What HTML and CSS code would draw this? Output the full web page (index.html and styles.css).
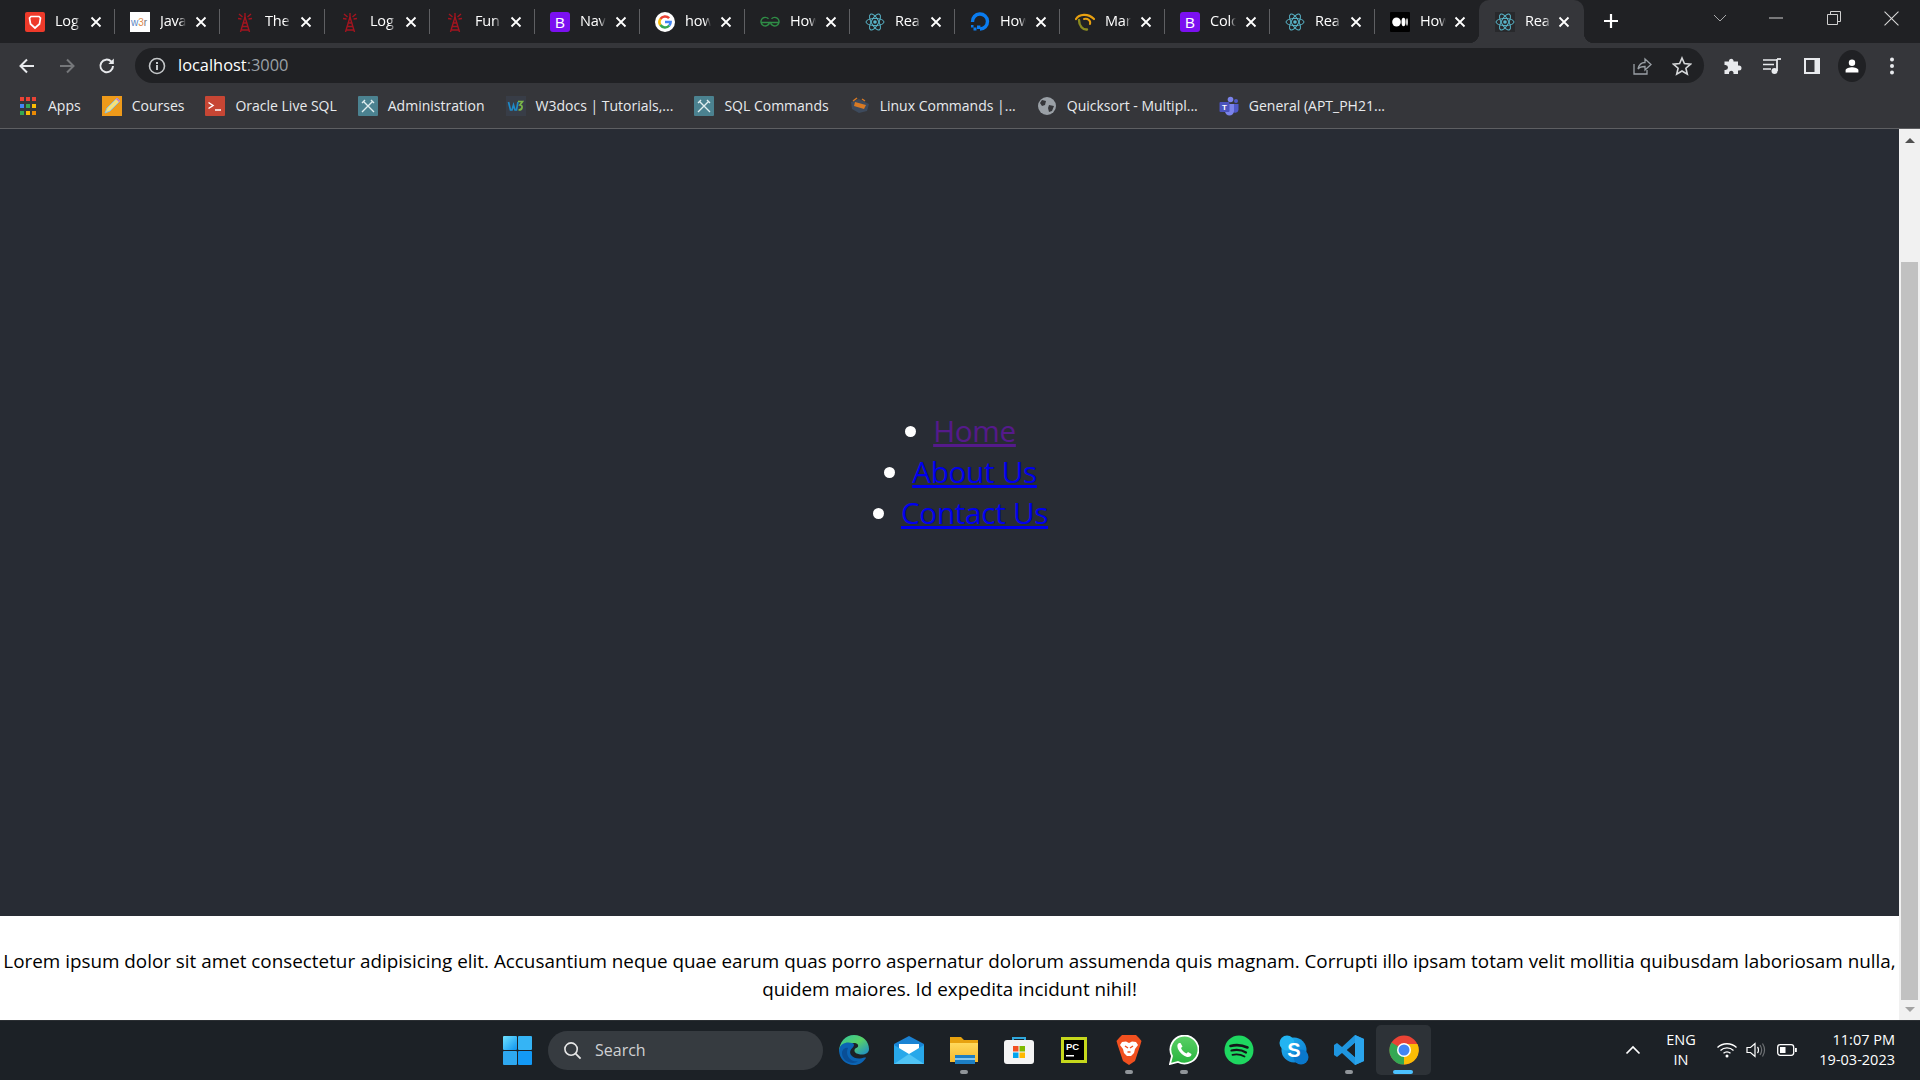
FILE: index.html
```html
<!DOCTYPE html>
<html lang="en">
<head>
<meta charset="utf-8">
<title>React App</title>
<link rel="stylesheet" href="styles.css">
</head>
<body>
<svg class="defs" aria-hidden="true">
  <defs>
    <symbol id="i-brave" viewBox="0 0 20 20"><rect width="20" height="20" rx="2" fill="#ee3a2a"/><path d="M4.5 6 L6 4.5 H14 L15.5 6 L14.5 12 L10 16 L5.500 12Z" fill="none" stroke="#fff" stroke-width="1.700"/></symbol>
    <symbol id="i-w3" viewBox="0 0 20 20"><rect width="20" height="20" fill="#fff"/><text x="1" y="14" font-size="10" font-family="Liberation Sans, sans-serif" fill="#5a86c5">w<tspan fill="#e08a4a">3</tspan><tspan fill="#777">r</tspan></text></symbol>
    <symbol id="i-tower" viewBox="0 0 20 20"><g fill="none" stroke="#a3141f" stroke-width="1.400"><path d="M10 5 L5.500 20 M10 5 L14.500 20 M7.500 11 H12.500 M7 14.500 H13 M6 18 H14"/><path d="M10 1 V5 M4 2 L7.500 5 M16 2 L12.500 5 M3 6.500 L6.500 7 M17 6.500 L13.500 7"/></g></symbol>
    <symbol id="i-boot" viewBox="0 0 20 20"><rect width="20" height="20" rx="3" fill="#7b10f0"/><text x="10" y="15.500" text-anchor="middle" font-size="15" font-family="Liberation Sans, sans-serif" fill="#fff">B</text></symbol>
    <symbol id="i-google" viewBox="0 0 20 20"><circle cx="10" cy="10" r="10" fill="#fff"/><g fill="none" stroke-width="2.600"><path d="M14.100 6.200A5.600 5.600 0 0 0 5.400 6.900" stroke="#ea4335"/><path d="M5.400 6.900A5.600 5.600 0 0 0 5.400 13.100" stroke="#fbbc05"/><path d="M5.400 13.100A5.600 5.600 0 0 0 14.300 13.500" stroke="#34a853"/><path d="M14.300 13.500A5.600 5.600 0 0 0 15.600 10H10" stroke="#4285f4"/></g></symbol>
    <symbol id="i-gfg" viewBox="0 0 20 20"><g fill="none" stroke="#2f8d46" stroke-width="1.400"><path d="M8.500 6.800A4.300 4.300 0 1 0 9.500 10.500H1"/><path d="M11.500 6.800A4.300 4.300 0 1 1 10.500 10.500H19"/></g></symbol>
    <symbol id="i-react" viewBox="0 0 20 20"><g fill="none" stroke="#58b4c8" stroke-width="1"><ellipse cx="10" cy="10" rx="9" ry="3.600"/><ellipse cx="10" cy="10" rx="9" ry="3.600" transform="rotate(60 10 10)"/><ellipse cx="10" cy="10" rx="9" ry="3.600" transform="rotate(120 10 10)"/></g><circle cx="10" cy="10" r="1.800" fill="#58b4c8"/></symbol>
    <symbol id="i-do" viewBox="0 0 20 20"><path d="M10 17A7.500 7.500 0 1 0 2.500 10" fill="none" stroke="#0a7cf0" stroke-width="3.400"/><path d="M7 13.500h3.400v3.400H7zM3.500 15.500h3v3h-3zM1 13h2.500v2.500H1z" fill="#0a7cf0"/></symbol>
    <symbol id="i-mar" viewBox="0 0 20 20"><g fill="none" stroke-linecap="round"><path d="M1 7C4 2 13 1 19 7" stroke="#e8a010" stroke-width="2.200"/><path d="M4 8C4 14 8 18 12 17.500" stroke="#8a8a20" stroke-width="2.400"/><path d="M9 7C13 6 16 9 15 12" stroke="#e8a010" stroke-width="2"/></g></symbol>
    <symbol id="i-medium" viewBox="0 0 20 20"><rect width="20" height="20" rx="1" fill="#000"/><ellipse cx="6.500" cy="10" rx="4.300" ry="4.500" fill="#fff"/><ellipse cx="13.500" cy="10" rx="2" ry="4.200" fill="#fff"/><ellipse cx="17" cy="10" rx="0.800" ry="3.800" fill="#fff"/></symbol>
    <symbol id="i-x" viewBox="0 0 12 12"><path d="M1.500 1.500 L10.500 10.500 M10.500 1.500 L1.500 10.500" stroke="#fff" stroke-width="1.800" fill="none"/></symbol>
    <symbol id="i-xmark" viewBox="0 0 20 20"><rect width="20" height="20" rx="1" fill="#4b8290"/><path d="M4 16 L14 6 M16 16 L6 6 M13 4 L16 7 M4 7 L7 4" stroke="#dfeef0" stroke-width="1.400" fill="none"/></symbol>
    <linearGradient id="g-win" x1="0" y1="0" x2="1" y2="1"><stop offset="0" stop-color="#6fe2ff"/><stop offset="1" stop-color="#0f94f0"/></linearGradient>
    <linearGradient id="g-edge" x1="0" y1="0" x2="1" y2="1"><stop offset="0" stop-color="#2fc4a0"/><stop offset="0.500" stop-color="#58d068"/><stop offset="1" stop-color="#1a8ad0"/></linearGradient>
    <linearGradient id="g-mail" x1="0" y1="0" x2="0" y2="1"><stop offset="0" stop-color="#1b7fd0"/><stop offset="1" stop-color="#1490df"/></linearGradient>
    <linearGradient id="g-folder" x1="0" y1="0" x2="0" y2="1"><stop offset="0" stop-color="#ffd95c"/><stop offset="1" stop-color="#f5b92e"/></linearGradient>
    <linearGradient id="g-skype" x1="0" y1="0" x2="1" y2="1"><stop offset="0" stop-color="#22b4f2"/><stop offset="1" stop-color="#0a78cc"/></linearGradient>
    <linearGradient id="g-wa" x1="0" y1="0" x2="0" y2="1"><stop offset="0" stop-color="#5bd066"/><stop offset="1" stop-color="#27b43e"/></linearGradient>
  </defs>
</svg>

<header class="tabstrip">
  <div class="tab"><svg class="fav"><use href="#i-brave"/></svg><span class="tab-title">Log</span><svg class="tab-x"><use href="#i-x"/></svg></div>
  <div class="tab"><svg class="fav"><use href="#i-w3"/></svg><span class="tab-title">Java</span><svg class="tab-x"><use href="#i-x"/></svg></div>
  <div class="tab"><svg class="fav"><use href="#i-tower"/></svg><span class="tab-title">The</span><svg class="tab-x"><use href="#i-x"/></svg></div>
  <div class="tab"><svg class="fav"><use href="#i-tower"/></svg><span class="tab-title">Log</span><svg class="tab-x"><use href="#i-x"/></svg></div>
  <div class="tab"><svg class="fav"><use href="#i-tower"/></svg><span class="tab-title">Fun</span><svg class="tab-x"><use href="#i-x"/></svg></div>
  <div class="tab"><svg class="fav"><use href="#i-boot"/></svg><span class="tab-title">Nav</span><svg class="tab-x"><use href="#i-x"/></svg></div>
  <div class="tab"><svg class="fav"><use href="#i-google"/></svg><span class="tab-title">how</span><svg class="tab-x"><use href="#i-x"/></svg></div>
  <div class="tab"><svg class="fav"><use href="#i-gfg"/></svg><span class="tab-title">How</span><svg class="tab-x"><use href="#i-x"/></svg></div>
  <div class="tab"><svg class="fav"><use href="#i-react"/></svg><span class="tab-title">Rea</span><svg class="tab-x"><use href="#i-x"/></svg></div>
  <div class="tab"><svg class="fav"><use href="#i-do"/></svg><span class="tab-title">How</span><svg class="tab-x"><use href="#i-x"/></svg></div>
  <div class="tab"><svg class="fav"><use href="#i-mar"/></svg><span class="tab-title">Mar</span><svg class="tab-x"><use href="#i-x"/></svg></div>
  <div class="tab"><svg class="fav"><use href="#i-boot"/></svg><span class="tab-title">Colo</span><svg class="tab-x"><use href="#i-x"/></svg></div>
  <div class="tab"><svg class="fav"><use href="#i-react"/></svg><span class="tab-title">Rea</span><svg class="tab-x"><use href="#i-x"/></svg></div>
  <div class="tab tab-prev"><svg class="fav"><use href="#i-medium"/></svg><span class="tab-title">How</span><svg class="tab-x"><use href="#i-x"/></svg></div>
  <div class="tab tab-active"><span class="fav-wrap"><svg class="fav"><use href="#i-react"/></svg></span><span class="tab-title">Rea</span><svg class="tab-x"><use href="#i-x"/></svg></div>
  <svg class="newtab" viewBox="0 0 16 16"><path d="M8 1V15M1 8H15" stroke="#fff" stroke-width="2.200" fill="none"/></svg>
  <div class="winctl">
    <svg class="wc wc-chev" viewBox="0 0 14 14"><path d="M1 4L7 10L13 4" stroke="#a8a9ab" fill="none"/></svg>
    <svg class="wc wc-min" viewBox="0 0 14 14"><path d="M0 7H14" stroke="#d0d0d0" fill="none"/></svg>
    <svg class="wc wc-res" viewBox="0 0 14 14"><path d="M.5 3.500H10.500V13.500H.5ZM3.500 3.500V.5H13.500V10.500H10.500" stroke="#d0d0d0" fill="none"/></svg>
    <svg class="wc wc-cls" viewBox="0 0 14 14"><path d="M.5 .5L13.500 13.500M13.500 .5L.5 13.500" stroke="#d8d8d8" fill="none"/></svg>
  </div>
</header>

<section class="toolbar">
  <div class="nav-row">
    <span class="tbtn"><svg viewBox="0 0 20 20"><path d="M17 10H4M10 3.500L3.500 10L10 16.500" stroke="#e8eaed" stroke-width="2" fill="none"/></svg></span>
    <span class="tbtn"><svg viewBox="0 0 20 20"><path d="M3 10H16M10 3.500L16.500 10L10 16.500" stroke="#75777a" stroke-width="2" fill="none"/></svg></span>
    <span class="tbtn"><svg viewBox="0 0 20 20"><path d="M16 10A6.300 6.300 0 1 1 14.200 5.500" stroke="#e8eaed" stroke-width="2" fill="none"/><path d="M16.800 2.500V8H11.300Z" fill="#e8eaed"/></svg></span>
    <div class="omnibox">
      <svg class="omni-info" viewBox="0 0 20 20"><circle cx="10" cy="10" r="7.500" stroke="#c4c7c9" stroke-width="1.600" fill="none"/><path d="M9 9h2v5H9zM9 6h2v2H9z" fill="#c4c7c9"/></svg>
      <span class="url">localhost<span class="url-port">:3000</span></span>
      <span class="tbtn omni-end"><svg viewBox="0 0 20 20"><path d="M2 8V18H15V14M6 13C7 8.500 10 6.500 13 6.500V3L19 8.500L13 14V10.500C10 10.500 7.500 11 6 13Z" stroke="#9aa0a6" stroke-width="1.300" fill="none"/></svg></span>
      <span class="tbtn"><svg viewBox="0 0 20 20"><path d="M10 2L12.400 7.600L18.500 8.200L13.900 12.200L15.300 18.200L10 15L4.700 18.200L6.100 12.200L1.500 8.200L7.600 7.600Z" stroke="#d5d7d9" stroke-width="1.600" fill="none"/></svg></span>
    </div>
    <div class="tools">
      <span class="tbtn"><svg viewBox="0 0 20 20"><path d="M7 4.500A2.300 2.300 0 0 1 11.500 4.500V5.500H16V9.500H17A2.500 2.500 0 0 1 17 14.500H16V18H11.500V16.500A2.300 2.300 0 0 0 7 16.500V18H2.500V14H3.500A2.500 2.500 0 0 0 3.500 9H2.500V5.500H7Z" fill="#e8eaed"/></svg></span>
      <span class="tbtn"><svg viewBox="0 0 20 20"><path d="M1 4H15M1 8.500H12M1 13H9" stroke="#e8eaed" stroke-width="1.700" fill="none"/><path d="M15 3V15" stroke="#e8eaed" stroke-width="1.800"/><path d="M15 3H19" stroke="#e8eaed" stroke-width="1.800"/><circle cx="12.500" cy="15" r="3" fill="#e8eaed"/></svg></span>
      <span class="tbtn"><svg viewBox="0 0 20 20"><path d="M2 2H18V18H2Z" fill="#e8eaed"/><rect x="4" y="4" width="8.500" height="12" fill="#35363a"/></svg></span>
      <span class="tbtn"><span class="avatar"><svg viewBox="0 0 20 20"><circle cx="10" cy="6" r="4" fill="#fff"/><path d="M2 18V15.500C2 12.500 7 11.500 10 11.500C13 11.500 18 12.500 18 15.500V18Z" fill="#fff"/></svg></span></span>
      <span class="tbtn"><svg viewBox="0 0 20 20"><circle cx="10" cy="3.500" r="2" fill="#e8eaed"/><circle cx="10" cy="10" r="2" fill="#e8eaed"/><circle cx="10" cy="16.500" r="2" fill="#e8eaed"/></svg></span>
    </div>
  </div>
  <nav class="bookmarks">
    <a class="bm"><svg class="bm-apps" viewBox="0 0 16 20"><g><rect y="1" width="4" height="4" fill="#ea4335"/><rect x="6" y="1" width="4" height="4" fill="#ea4335"/><rect x="12" y="1" width="4" height="4" fill="#ea4335"/><rect y="8" width="4" height="4" fill="#4285f4"/><rect x="6" y="8" width="4" height="4" fill="#34a853"/><rect x="12" y="8" width="4" height="4" fill="#fbbc05"/><rect y="15" width="4" height="4" fill="#34a853"/><rect x="6" y="15" width="4" height="4" fill="#fbbc05"/><rect x="12" y="15" width="4" height="4" fill="#ea8a05"/></g></svg>Apps</a>
    <a class="bm"><svg class="fav" viewBox="0 0 20 20"><rect width="20" height="20" fill="#ee9a1a"/><path d="M3 17L5 12L15 2L18 5L8 15Z" fill="#f5e07a" stroke="#8ac0e0" stroke-width="1"/><path d="M14 3L17 6L18 5L15 2Z" fill="#d070c0"/></svg>Courses</a>
    <a class="bm"><svg class="fav" viewBox="0 0 20 20"><rect width="20" height="20" rx="1" fill="#c74634"/><path d="M3.500 6.500L8 9.500L3.500 12.500" stroke="#fff" stroke-width="1.500" fill="none"/><path d="M10 14H16" stroke="#fff" stroke-width="1.500"/></svg>Oracle Live SQL</a>
    <a class="bm"><svg class="fav"><use href="#i-xmark"/></svg>Administration</a>
    <a class="bm"><svg class="fav" viewBox="0 0 20 20"><rect width="20" height="20" fill="#383d47"/><path d="M2.500 6L4.500 14H6L7.500 9L9 14H10.500L12 6" stroke="#1f8ac7" stroke-width="1.700" fill="none"/><path d="M12 5.500H16.500L14 9C17 9 17 14 12.500 14" stroke="#7ab648" stroke-width="1.700" fill="none"/></svg>W3docs | Tutorials,...</a>
    <a class="bm"><svg class="fav"><use href="#i-xmark"/></svg>SQL Commands</a>
    <a class="bm"><svg class="fav" viewBox="0 0 20 20"><path d="M1 6L9 3L19 8L17 15L9 17L2 13Z" fill="#3d4a5c"/><path d="M5 6L16 9L14 13L4 10Z" fill="#d87a24"/><path d="M3 5L7 2M12 3L15 5" stroke="#d87a24" stroke-width="1.500"/></svg>Linux Commands |...</a>
    <a class="bm"><svg class="fav" viewBox="0 0 20 20"><circle cx="10" cy="10" r="9" fill="#9aa0a6"/><path d="M5 4L9 5L8 9L5 10L3 7ZM12 9L17 10L15 15L12 16L11 12Z" fill="#35363a"/></svg>Quicksort - Multipl...</a>
    <a class="bm"><svg class="fav" viewBox="0 0 20 20"><circle cx="11.500" cy="3.500" r="2.800" fill="#7b83eb"/><circle cx="17" cy="5" r="2" fill="#5059c9"/><path d="M13 8H19.500V14A3.500 3.500 0 0 1 13 15Z" fill="#5059c9"/><path d="M6 8H15V15A4.500 4.500 0 0 1 6 15Z" fill="#7b83eb"/><rect x="0.500" y="6" width="10" height="10" rx="1" fill="#4b53bc"/><text x="5.500" y="14" font-size="8" text-anchor="middle" font-family="Liberation Sans, sans-serif" font-weight="700" fill="#fff">T</text></svg>General (APT_PH21...</a>
  </nav>
</section>

<div class="viewport">
  <div class="page">
    <main class="app-header">
      <ul class="app-nav">
        <li><a class="link link-visited" href="#">Home</a></li>
        <li><a class="link" href="#">About Us</a></li>
        <li><a class="link" href="#">Contact Us</a></li>
      </ul>
    </main>
    <p class="lorem">Lorem ipsum dolor sit amet consectetur adipisicing elit. Accusantium neque quae earum quas porro aspernatur dolorum assumenda quis magnam. Corrupti illo ipsam totam velit mollitia quibusdam laboriosam nulla,<br>quidem maiores. Id expedita incidunt nihil!</p>
  </div>
  <aside class="scrollbar">
    <span class="sb-arrow sb-up"></span>
    <span class="sb-thumb"></span>
    <span class="sb-arrow sb-down"></span>
  </aside>
</div>

<footer class="taskbar">
  <div class="tb-left"></div>
  <div class="tb-center">
    <span class="ti"><svg class="ti-win" viewBox="0 0 29 29"><rect width="14" height="14" rx="1" fill="url(#g-win)"/><rect x="15" width="14" height="14" rx="1" fill="#35b4f5"/><rect y="15" width="14" height="14" rx="1" fill="#2ea8f0"/><rect x="15" y="15" width="14" height="14" rx="1" fill="#1399f5"/></svg></span>
    <div class="search"><svg class="search-ico" viewBox="0 0 20 20"><circle cx="8.500" cy="8.500" r="6.500" stroke="#e6e6e6" stroke-width="1.700" fill="none"/><path d="M13.300 13.300L18.500 18.500" stroke="#e6e6e6" stroke-width="1.900"/></svg><span>Search</span></div>
    <span class="ti"><svg class="ico" viewBox="0 0 30 30"><path d="M15 0C24 0 30 6.500 30 14C30 18 26.500 19.500 23 19.500C19 19.500 15 18 15.500 15C16 12.500 20 13 19 10C18 7 10.500 7.500 6 11C3 13 1 15 0 17C0 7 6.500 0 15 0Z" fill="url(#g-edge)"/><path d="M0 15C1 8 8 6.500 13 8C17 9.500 14 12 12 14.500C9 19 14 24 21 23.500C24.500 23 27 22 27 23C24 27.500 20 30 15 30C6.500 30 0 23.500 0 15Z" fill="#0b64b4"/><path d="M9 13C6 19 10 27 19 26.500C14 30 3 27 3 18C3 15 6 12 9 13Z" fill="#094e96"/></svg></span>
    <span class="ti"><svg class="ico" viewBox="0 0 30 30"><path d="M0 9L15 1L30 9V29H0Z" fill="url(#g-mail)"/><path d="M5 9H25V15L15 21L5 15Z" fill="#fff"/><path d="M0 10L15 19L30 10V29H0Z" fill="#28a8ea"/><path d="M0 29L15 19L30 29Z" fill="#50c4f5"/></svg></span>
    <span class="ti ti-run"><svg class="ico" viewBox="0 0 30 30"><path d="M1 2H12L15 5H29V27H1Z" fill="#e7a20f"/><path d="M1 8H29V27H1Z" fill="url(#g-folder)"/><rect x="6" y="20" width="20" height="9" fill="#1c7fc4"/><rect x="6" y="23" width="20" height="2" fill="#86c8ef"/></svg></span>
    <span class="ti"><svg class="ico" viewBox="0 0 30 30"><path d="M9 7V3H21V7" stroke="#2fa8dd" stroke-width="2" fill="none"/><rect y="5" width="30" height="24" rx="3" fill="#f4f4f4"/><rect x="9" y="11" width="5.500" height="5.500" fill="#f25022"/><rect x="15.500" y="11" width="5.500" height="5.500" fill="#7fba00"/><rect x="9" y="17.500" width="5.500" height="5.500" fill="#00a4ef"/><rect x="15.500" y="17.500" width="5.500" height="5.500" fill="#ffb900"/></svg></span>
    <span class="ti"><svg class="ico ico-pc" viewBox="0 0 26 26"><rect width="26" height="26" fill="#c6d81c"/><rect x="3" y="3" width="20" height="20" fill="#000"/><text x="5" y="13" font-size="9.500" font-weight="700" font-family="Liberation Sans, sans-serif" fill="#fff">PC</text><rect x="5" y="18" width="8" height="1.500" fill="#fff"/></svg></span>
    <span class="ti ti-run"><svg class="ico" viewBox="0 0 30 30"><path d="M8 0H22L25 3L27.500 6L26 11L21 26L15 30L9 26L4 11L2.500 6L5 3Z" fill="#f1501f"/><path d="M8 7L12 6.500L15 8L18 6.500L22 7L24 10L21 14L20 18L17 21H13L10 18L9 14L6 10Z" fill="#fff"/><path d="M11 11L14 13M19 11L16 13M13.500 17H16.500" stroke="#f1501f" stroke-width="1.500"/></svg></span>
    <span class="ti ti-run"><svg class="ico" viewBox="0 0 30 30"><path d="M1 29L3 21A14 14 0 1 1 9 27Z" fill="url(#g-wa)" stroke="#fff" stroke-width="1.800"/><path d="M10 8C8 9 8 11 9 14C11 18 14 20.500 18 22C20.500 22.500 22.500 21 22.500 19L19 17L17.500 18.500C15 17.500 13 15.500 12 13L13.500 11.500L11.500 8Z" fill="#fff"/></svg></span>
    <span class="ti"><svg class="ico" viewBox="0 0 30 30"><circle cx="15" cy="15" r="14.500" fill="#1ed760"/><g fill="none" stroke="#14161a" stroke-linecap="round"><path d="M6.500 11C12 9.500 18 10 23.500 12.500" stroke-width="2.600"/><path d="M7.500 15.500C12 14.500 18 15 22 17.500" stroke-width="2.200"/><path d="M8.500 19.800C12 19 17 19.500 20.500 21.500" stroke-width="1.800"/></g></svg></span>
    <span class="ti"><svg class="ico" viewBox="0 0 30 30"><circle cx="15" cy="15" r="12.500" fill="url(#g-skype)"/><circle cx="8" cy="8" r="7.500" fill="#22b4f2"/><circle cx="22" cy="22" r="7.500" fill="#0a78cc"/><text x="15" y="22" text-anchor="middle" font-size="20" font-weight="700" font-family="Liberation Sans, sans-serif" fill="#fff">S</text></svg></span>
    <span class="ti ti-run"><svg class="ico" viewBox="0 0 30 30"><path d="M21 0L30 4V26L21 30L8 18L3 22L0 20V10L3 8L8 12ZM21 8L13 15L21 22Z" fill="#1f96e0"/><path d="M21 0L30 4V26L21 30Z" fill="#2aa4ec"/><path d="M21 8V22L13 15Z" fill="#1c2126"/></svg></span>
    <span class="ti ti-active"><svg class="ico" viewBox="0 0 30 30"><circle cx="15" cy="15" r="14.500" fill="#ea4335"/><path d="M15 15L2.500 7.500A14.500 14.500 0 0 0 15 29.500Z" fill="#34a853"/><path d="M15 9H28.500A14.500 14.500 0 0 1 15 29.500L15 15Z" fill="#fbbc05"/><circle cx="15" cy="15" r="7" fill="#fff"/><circle cx="15" cy="15" r="5.500" fill="#4285f4"/></svg></span>
  </div>
  <div class="tray">
    <svg class="tray-chev" viewBox="0 0 16 10"><path d="M1.500 8.500L8 2L14.500 8.500" stroke="#fff" stroke-width="1.700" fill="none"/></svg>
    <div class="lang">ENG<br>IN</div>
    <svg class="tray-ico" viewBox="0 0 20 20"><g fill="none" stroke="#fff" stroke-width="1.300"><path d="M.5 7.500C5.500 2.500 14.500 2.500 19.500 7.500"/><path d="M3.500 10.500C7 7 13 7 16.500 10.500"/><path d="M6.500 13.300C8.500 11.500 11.500 11.500 13.500 13.300"/></g><circle cx="10" cy="16" r="1.500" fill="#fff"/></svg>
    <svg class="tray-ico tray-vol" viewBox="0 0 20 20"><path d="M1 7.500H4.500L9 3.500V16.500L4.500 12.500H1Z" stroke="#fff" stroke-width="1.200" fill="none"/><path d="M11.500 7C12.800 8.500 12.800 11.500 11.500 13" stroke="#fff" stroke-width="1.200" fill="none"/><path d="M14 5C16 8 16 12 14 15M16.500 3.500C19 7.500 19 12.500 16.500 16.500" stroke="#6e7174" stroke-width="1.200" fill="none"/></svg>
    <svg class="tray-ico tray-bat" viewBox="0 0 20 20"><rect x=".7" y="4.700" width="16" height="10.600" rx="2.500" stroke="#fff" stroke-width="1.300" fill="none"/><rect x="3" y="7" width="5.500" height="6" fill="#fff"/><rect x="18" y="8" width="1.800" height="4" fill="#fff"/></svg>
    <div class="clock">11:07 PM<br>19-03-2023</div>
  </div>
</footer>
</body>
</html>
```
FILE: styles.css
```css
* { box-sizing: border-box; }
html, body { margin: 0; height: 100%; }
body {
  width: 1920px;
  height: 1080px;
  overflow: hidden;
  display: flex;
  flex-direction: column;
  font-family: "Open Sans", "Noto Sans", sans-serif;
  background: #282c34;
}
.defs { position: absolute; width: 0; height: 0; }

.tabstrip {
  height: 43px;
  flex: none;
  display: flex;
  padding-left: 9px;
  background: #202124;
  position: relative;
}
.tab {
  width: 105px;
  height: 43px;
  display: flex;
  align-items: center;
  padding-left: 16px;
  position: relative;
  color: #fff;
}
.tab::after {
  content: "";
  position: absolute;
  right: -1px;
  top: 9px;
  height: 25px;
  width: 1px;
  background: #5f6063;
}
.tab-prev::after { display: none; }
.fav { width: 20px; height: 20px; flex: none; display: block; }
.tab-title {
  margin: -2px 0 0 10px;
  width: 26px;
  overflow: hidden;
  white-space: nowrap;
  font-size: 14.500px;
  letter-spacing: -0.2px;
  flex: none;
  -webkit-mask-image: linear-gradient(to right, #000 75%, transparent 100%);
  mask-image: linear-gradient(to right, #000 75%, transparent 100%);
}
.tab-x { width: 12px; height: 12px; margin-left: 9px; flex: none; }
.tab-prev .tab-x { margin-left: 8px; }
.tab-active {
  background: #35363a;
  border-radius: 10px 10px 0 0;
}
.tab-active .tab-x { margin-left: 7px; }
.tab-active::before, .tab-active::after {
  content: "";
  position: absolute;
  top: auto;
  bottom: 0;
  width: 10px;
  height: 10px;
}
.tab-active::before { left: -10px; background: radial-gradient(circle at 0 0, transparent 10px, #35363a 10.500px); }
.tab-active::after { right: -10px; background: radial-gradient(circle at 100% 0, transparent 10px, #35363a 10.500px); }
.fav-wrap { background: #28292c; display: block; height: 20px; }
.newtab { width: 16px; height: 16px; margin: 13px 0 0 19px; flex: none; }
.winctl { flex: 1; display: block; position: relative; }
.wc { position: absolute; top: 11px; width: 14px; height: 14px; }
.wc-chev { left: 93px; width: 16px; }
.wc-min { left: 150px; }
.wc-res { left: 208px; }
.wc-cls { left: 265px; width: 15px; height: 15px; }

.toolbar { flex: none; background: #35363a; height: 86px; border-bottom: 1px solid #5e5f62; }
.nav-row { height: 40px; display: flex; padding: 5px 8px 0 7px; }
.tbtn { width: 40px; height: 35px; display: flex; align-items: center; justify-content: center; flex: none; }
.tbtn svg { width: 20px; height: 20px; }
.omnibox {
  flex: 1;
  margin-left: 8px;
  height: 35px;
  background: #202124;
  border-radius: 18px;
  display: flex;
  align-items: center;
  padding: 0 2px 0 12px;
}
.omni-info { width: 20px; height: 20px; flex: none; }
.url { margin: -2px 0 0 11px; color: #fff; font-size: 16.400px; }
.url-port { color: #9aa0a6; }
.omni-end { margin-left: auto; }
.tools { display: flex; margin-left: 8px; }
.avatar { width: 28px; height: 32px; border-radius: 50%; background: #202124; display: flex; align-items: center; justify-content: center; }
.avatar svg { width: 16px; height: 16px; }

.bookmarks {
  height: 45px;
  display: flex;
  align-items: center;
  gap: 21px;
  padding-left: 20px;
}
.bm { display: flex; align-items: center; gap: 10px; color: #e8eaed; font-size: 14px; white-space: nowrap; }
.bm-apps { width: 16px; height: 20px; flex: none; }
.bm:first-child { gap: 12px; }

.viewport { flex: 1; display: flex; min-height: 0; }
.page { flex: 1; display: flex; flex-direction: column; background: #fff; min-width: 0; }
.app-header {
  flex: 1;
  background: #282c34;
  display: flex;
  flex-direction: column;
  justify-content: center;
  padding-bottom: 103px;
  color: #fff;
}
.app-nav {
  margin: 0;
  padding: 0 0 0 50px;
  display: flex;
  flex-direction: column;
  align-items: center;
  font-size: 29.700px;
  line-height: 41px;
  letter-spacing: -0.3px;
}
.link { color: #0000ee; text-decoration-thickness: 2.500px; }
.link-visited { color: #551a8b; }
.lorem {
  margin: 0;
  height: 104px;
  padding-top: 32px;
  text-align: center;
  font-size: 18.850px;
  line-height: 27.500px;
  color: #000;
  white-space: nowrap;
}
.scrollbar {
  width: 21px;
  flex: none;
  background: #f1f1f1;
  display: flex;
  flex-direction: column;
  align-items: center;
  position: relative;
}
.sb-arrow { width: 0; height: 0; border-left: 5px solid transparent; border-right: 5px solid transparent; position: absolute; }
.sb-up { top: 9px; border-bottom: 5px solid #505050; }
.sb-down { bottom: 8px; border-top: 5px solid #a3a3a3; }
.sb-thumb { width: 17px; height: 738px; background: #c1c1c1; margin-top: 133px; }

.taskbar {
  height: 60px;
  flex: none;
  background: #1c2126;
  border-top: 1px solid #2b2f33;
  display: grid;
  grid-template-columns: 1fr auto 1fr;
  align-items: center;
  color: #fff;
  padding-bottom: 1px;
}
.tb-center { display: flex; align-items: center; padding-left: 1px; }
.ti { width: 55px; height: 50px; display: flex; align-items: center; justify-content: center; position: relative; flex: none; }
.ti-win { width: 29px; height: 29px; }
.ico { width: 30px; height: 30px; }
.ico-pc { width: 26px; height: 26px; }
.ti-run::after, .ti-active::after {
  content: "";
  position: absolute;
  bottom: 1px;
  left: 24px;
  width: 8px;
  height: 4px;
  border-radius: 2px;
  background: #90959a;
}
.ti-active { background: #2d3237; border-radius: 5px; }
.ti-active::after { left: 17px; width: 20px; background: #4cc2ff; }
.search {
  width: 275px;
  height: 39px;
  margin: 0 3px 0 3px;
  border-radius: 20px;
  background: #363b40;
  display: flex;
  align-items: center;
  padding-left: 15px;
  color: #cfd1d3;
  font-size: 16px;
  flex: none;
}
.search-ico { width: 19px; height: 19px; margin-right: 13px; }
.tray { display: flex; align-items: center; justify-content: flex-end; padding-right: 25px; }
.tray-chev { width: 16px; height: 10px; margin-right: 24px; }
.lang { width: 32px; text-align: center; font-size: 14.500px; line-height: 20px; margin-right: 20px; }
.tray-ico { width: 20px; height: 20px; flex: none; margin-right: 9px; }
.tray-vol { margin-right: 11px; }
.tray-bat { margin-right: 18px; }
.clock { width: 80px; text-align: right; font-size: 14.500px; line-height: 20px; white-space: nowrap; }
```
